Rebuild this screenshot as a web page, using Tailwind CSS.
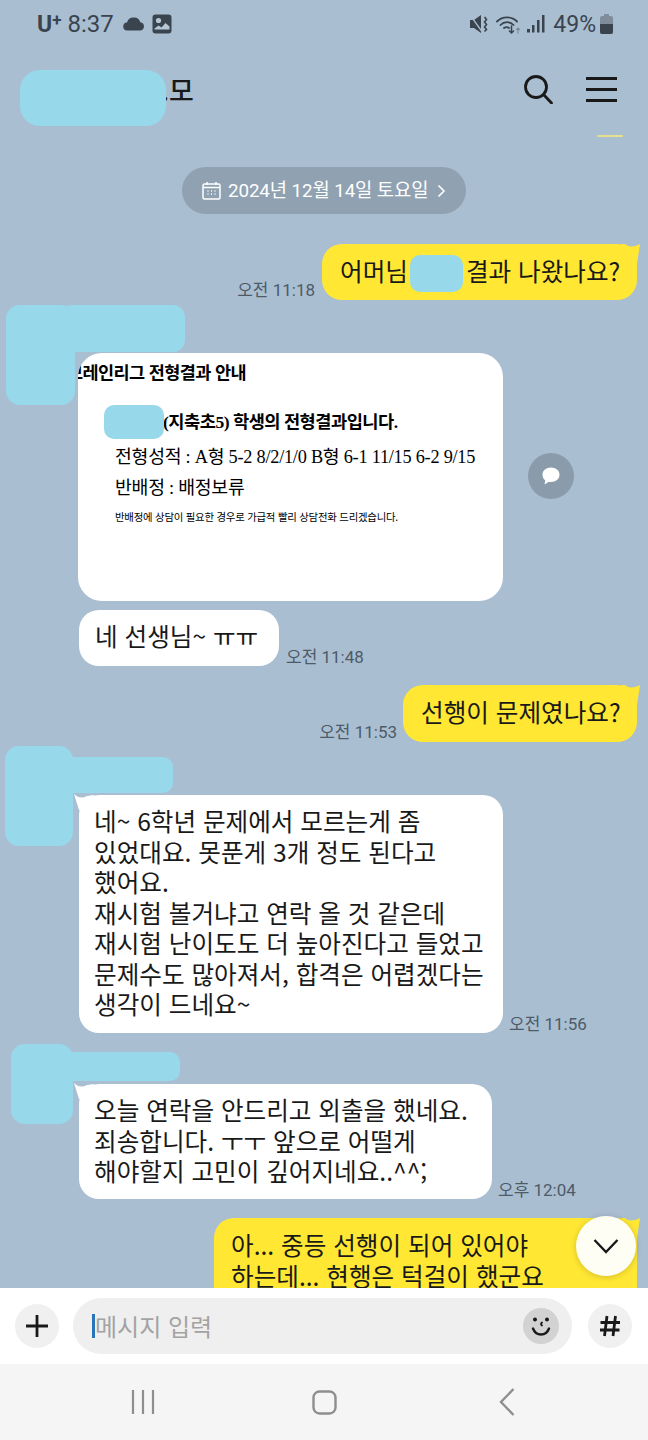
<!DOCTYPE html>
<html lang="ko">
<head>
<meta charset="utf-8">
<script src="https://cdn.jsdelivr.net/npm/@tailwindcss/browser@4"></script>
</head>
<body class="m-0">
<div class="relative w-[648px] h-[1440px] overflow-hidden bg-[#aabed1] font-['Noto_Sans_CJK_KR',sans-serif] text-[#191919]">
  <!-- chat -->
  <div class="h-[1288px] overflow-hidden flex flex-col">
    <!-- status bar -->
    <div class="h-[48px] shrink-0 flex items-center pl-[37px] pr-[35px] text-[#39444f] font-['Roboto',sans-serif]">
      <span class="text-[23px] font-bold leading-none">U</span><span class="text-[17px] font-bold leading-none -mt-[7px]">+</span>
      <span class="text-[24px] ml-[6px] leading-none">8:37</span>
      <svg class="ml-[9px]" width="22" height="14" viewBox="0 0 22 14"><path fill="#39444f" d="M4.500 13.500a4 4 0 0 1-.5-8A6.800 6.800 0 0 1 11 .5a6.500 6.500 0 0 1 6.300 4.700A4.200 4.200 0 0 1 17.500 13.500z"/></svg>
      <svg class="ml-[7px]" width="20" height="20" viewBox="0 0 20 20"><rect x="0.500" y="0.500" width="19" height="19" rx="3" fill="#39444f"/><circle cx="6.500" cy="6.500" r="2.600" fill="#b5c6d6"/><path fill="#b5c6d6" d="M2.500 15.500v-1l4-3 3 2 4-4.500 4 3.500v3z"/></svg>
      <div class="flex-1"></div>
      <svg width="18" height="20" viewBox="0 0 18 20"><path fill="#39444f" d="M0 6h4L11 1v18l-7-5H0z"/><path d="M0 1l13 18" stroke="#aabed1" stroke-width="1.300"/><path d="M14.500 3l2 2.500-2 2.500 2 2.500-2 2.500 2 2.500-2 2" fill="none" stroke="#39444f" stroke-width="1.600"/></svg>
      <svg class="ml-[8px]" width="25" height="20" viewBox="0 0 25 20" fill="none" stroke="#39444f" stroke-width="1.800" stroke-linecap="round"><path d="M1 7.500a14 14 0 0 1 20 0"/><path d="M4.500 11a9 9 0 0 1 13 0"/><path d="M8 14a4.500 4.500 0 0 1 5 0"/><path d="M15.500 12v7M13.500 17l2 2 2-2" stroke-width="1.500"/><path d="M22 19v-5M20.500 15.500l1.500-1.500 1.500 1.500" stroke="#7d8b98" stroke-width="1.200"/></svg>
      <svg class="ml-[6px]" width="18" height="18" viewBox="0 0 18 18" fill="#39444f"><rect x="0" y="14" width="3" height="3.500"/><rect x="5" y="10" width="2.500" height="7.500"/><rect x="10" y="5" width="2.500" height="12.500"/><rect x="15" y="0" width="2.500" height="17.500"/></svg>
      <span class="text-[23px] ml-[8px] leading-none">49%</span>
      <svg class="ml-[4px]" width="13" height="20" viewBox="0 0 13 20"><rect x="4" y="0" width="5" height="2" fill="#7f8d9b"/><rect x="0" y="2" width="13" height="18" rx="2" fill="#7f8d9b"/><path fill="#39444f" d="M0 10h13v8a2 2 0 0 1-2 2H2a2 2 0 0 1-2-2z"/></svg>
    </div>
    <!-- header -->
    <div class="h-[80px] shrink-0 flex items-center pl-[161px] pr-[31px] pt-[3px]">
      <span class="text-[27px] leading-none font-medium">.모</span>
      <div class="flex-1"></div>
      <svg width="29" height="29" viewBox="0 0 29 29" fill="none" stroke="#191919" stroke-width="2.800"><circle cx="12" cy="12" r="10.500"/><path d="M19.500 19.500l8 8.500" stroke-linecap="round"/></svg>
      <div class="ml-[33px] w-[31px] flex flex-col gap-[8px]">
        <div class="h-[3px] bg-[#191919]"></div><div class="h-[3px] bg-[#191919]"></div><div class="h-[3px] bg-[#191919]"></div>
      </div>
    </div>
    <div class="shrink-0 h-[39px] relative">
      <div class="absolute left-[597px] top-[7px] w-[26px] h-[2px] rounded-full bg-[#e5e08a]"></div>
    </div>
    <!-- date -->
    <div class="shrink-0 flex justify-center">
      <div class="w-[284px] h-[47px] rounded-full bg-[#90a2b1] flex items-center pl-[20px] text-white">
        <svg width="19" height="19" viewBox="0 0 19 19" fill="none" stroke="#fff" stroke-width="1.500"><rect x="1" y="3" width="17" height="15" rx="1.500"/><path d="M5 1v3M14 1v3M1 6.500h17"/><path d="M5.500 10h1M9 10h1M12.500 10h1M5.500 13h1M9 13h1M12.500 13h1" stroke-width="1.600"/></svg>
        <span class="ml-[7px] pt-[2px] text-[18.800px] leading-none tracking-[-0.1px] font-['Roboto','Noto_Sans_CJK_KR',sans-serif]">2024년 12월 14일 토요일</span>
        <svg class="ml-[9px]" width="9" height="14" viewBox="0 0 9 14" fill="none" stroke="#fff" stroke-width="1.600"><path d="M1.500 1.500L7 7l-5.500 5.500"/></svg>
      </div>
    </div>
    <!-- msg 1 -->
    <div class="shrink-0 mt-[30px] flex justify-end items-end pr-[11px]">
      <span class="text-[17px] leading-none text-[#4d5b68] mr-[7px] mb-[1px] font-['Roboto','Noto_Sans_CJK_KR',sans-serif]">오전 11:18</span>
      <div class="relative h-[56px] w-[315px] rounded-[20px] bg-[#ffe733] flex items-center pl-[18px] pb-[4px] text-[24.600px] leading-none whitespace-nowrap">
        어머님<span class="w-[58px]"></span>결과 나왔나요?
        <svg class="absolute -right-[3px] top-0" width="18" height="20" viewBox="0 0 18 20"><path fill="#ffe733" d="M0 0H3Q8 5 18 0L15 20H0z"/></svg>
      </div>
    </div>
    <!-- image -->
    <div class="shrink-0 mt-[53px] ml-[78px] flex items-center">
      <div class="w-[425px] h-[248px] rounded-[24px] bg-white overflow-hidden text-black">
        <div class="font-['Liberation_Serif','Noto_Sans_CJK_KR',serif]">
          <p class="text-[17.500px] font-bold leading-none -ml-[11px] mt-[10px] whitespace-nowrap font-['Noto_Sans_CJK_KR',sans-serif] tracking-[-0.6px]">브레인리그 전형결과 안내</p>
          <p class="text-[17.600px] font-bold leading-none ml-[85px] mt-[33px] whitespace-nowrap tracking-[-0.5px]">(지축초5) 학생의 전형결과입니다.</p>
          <p class="text-[18.300px] leading-none ml-[37px] mt-[17px] whitespace-nowrap tracking-[-0.25px]">전형성적 : A형 5-2 8/2/1/0 B형 6-1 11/15 6-2 9/15</p>
          <p class="text-[18.300px] leading-none ml-[37px] mt-[13px] whitespace-nowrap tracking-[-0.25px]">반배정 : 배정보류</p>
          <p class="text-[10.400px] leading-none ml-[37px] mt-[14px] whitespace-nowrap font-['Noto_Sans_CJK_KR',sans-serif] tracking-[-0.22px]">반배정에 상담이 필요한 경우로 가급적 빨리 상담전화 드리겠습니다.</p>
        </div>
      </div>
      <div class="ml-[25px] -mt-[2px] w-[46px] h-[46px] rounded-full bg-[#8a9cab] flex items-center justify-center">
        <svg width="20" height="20" viewBox="0 0 20 20"><path fill="#fff" d="M10 1.500c4.700 0 8.500 3 8.500 7.300S14.700 16 10 16c-.8 0-1.500-.1-2.200-.2L3.500 18.500l.8-4C2.500 13.100 1.500 11.100 1.500 8.800 1.500 4.500 5.300 1.500 10 1.500z"/></svg>
      </div>
    </div>
    <!-- ㅠㅠ -->
    <div class="shrink-0 mt-[9px] ml-[79px] flex items-end">
      <div class="h-[56px] w-[200px] rounded-[20px] bg-white flex items-center pl-[16px] pb-[5px] text-[24.600px] leading-none whitespace-nowrap">네 선생님~ ㅠㅠ</div>
      <span class="text-[17px] leading-none text-[#4d5b68] ml-[7px] font-['Roboto','Noto_Sans_CJK_KR',sans-serif]">오전 11:48</span>
    </div>
    <!-- 선행 -->
    <div class="shrink-0 mt-[19px] flex justify-end items-end pr-[11px]">
      <span class="text-[17px] leading-none text-[#4d5b68] mr-[6px] mb-[1px] font-['Roboto','Noto_Sans_CJK_KR',sans-serif]">오전 11:53</span>
      <div class="relative h-[57px] w-[234px] rounded-[20px] bg-[#ffe733] flex items-center pl-[18px] pb-[4px] text-[24.600px] leading-none whitespace-nowrap">
        선행이 문제였나요?
        <svg class="absolute -right-[3px] top-0" width="18" height="20" viewBox="0 0 18 20"><path fill="#ffe733" d="M0 0H3Q8 5 18 0L15 20H0z"/></svg>
      </div>
    </div>
    <!-- 네~ -->
    <div class="shrink-0 mt-[53px] ml-[79px] flex items-end">
      <div class="relative w-[424px] h-[238px] rounded-[20px] bg-white pl-[15px] pt-[10px] text-[24.600px] leading-[30.500px] whitespace-nowrap">
        <svg class="absolute -left-[5px] -top-[1px]" width="20" height="16" viewBox="0 0 20 16"><path fill="#fff" d="M0 0Q6 6 13 2L20 1V16H5z"/></svg>
        <span class="relative">네~ 6학년 문제에서 모르는게 좀<br>있었대요. 못푼게 3개 정도 된다고<br>했어요.<br>재시험 볼거냐고 연락 올 것 같은데<br>재시험 난이도도 더 높아진다고 들었고<br>문제수도 많아져서, 합격은 어렵겠다는<br>생각이 드네요~</span>
      </div>
      <span class="text-[17px] leading-none text-[#4d5b68] ml-[6px] font-['Roboto','Noto_Sans_CJK_KR',sans-serif]">오전 11:56</span>
    </div>
    <!-- 오늘 -->
    <div class="shrink-0 mt-[51px] ml-[79px] flex items-end">
      <div class="relative w-[413px] h-[115px] rounded-[20px] bg-white pl-[15px] pt-[10px] text-[24.600px] leading-[30.700px] whitespace-nowrap">
        <svg class="absolute -left-[5px] -top-[1px]" width="20" height="16" viewBox="0 0 20 16"><path fill="#fff" d="M0 0Q6 6 13 2L20 1V16H5z"/></svg>
        <span class="relative">오늘 연락을 안드리고 외출을 했네요.<br>죄송합니다. ㅜㅜ 앞으로 어떨게<br>해야할지 고민이 깊어지네요..^^;</span>
      </div>
      <span class="text-[17px] leading-none text-[#4d5b68] ml-[6px] font-['Roboto','Noto_Sans_CJK_KR',sans-serif]">오후 12:04</span>
    </div>
    <!-- 아 -->
    <div class="shrink-0 mt-[19px] flex justify-end pr-[11px]">
      <div class="relative w-[423px] h-[100px] rounded-[20px] bg-[#ffe733] pl-[17px] pt-[11px] text-[24.600px] leading-[30.700px] whitespace-nowrap">
        아... 중등 선행이 되어 있어야<br>하는데... 현행은 턱걸이 했군요
        <svg class="absolute -right-[3px] top-0" width="18" height="20" viewBox="0 0 18 20"><path fill="#ffe733" d="M0 0H3Q8 5 18 0L15 20H0z"/></svg>
      </div>
    </div>
  </div>

  <!-- input bar -->
  <div class="h-[76px] bg-white flex items-center pl-[15px] pr-[16px]">
    <div class="w-[44px] h-[44px] rounded-full bg-[#f0f0f0] flex items-center justify-center">
      <svg width="22" height="22" viewBox="0 0 22 22" stroke="#191919" stroke-width="2.800"><path d="M11 0v22M0 11h22"/></svg>
    </div>
    <div class="relative ml-[14px] w-[499px] h-[56px] rounded-full bg-[#efefef] flex items-center pl-[19px]">
      <div class="w-[3px] h-[24px] bg-[#2a74b8]"></div>
      <span class="text-[24px] leading-none text-[#a3a3a3]">메시지 입력</span>
      <div class="absolute right-[13px] top-[10px] w-[36px] h-[36px] rounded-full bg-[#d2d2d2] flex items-center justify-center">
        <svg width="24" height="24" viewBox="0 0 24 24" fill="none" stroke="#191919" stroke-width="2.400" stroke-linecap="round"><circle cx="6" cy="5.500" r="2" fill="#191919" stroke="none"/><circle cx="18" cy="5.500" r="2" fill="#191919" stroke="none"/><path d="M13 8.500q-2 1.500 0 3" stroke-width="1.800"/><path d="M4 14.500c1.500 4 4.500 6 8 6s6.500-2 8-6"/></svg>
      </div>
    </div>
    <div class="ml-[16px] w-[44px] h-[44px] rounded-full bg-[#f0f0f0] flex items-center justify-center">
      <svg width="22" height="22" viewBox="0 0 22 22" stroke="#191919" stroke-width="2.800"><path d="M8 1L5.500 21M16.500 1L14 21M1.500 7.500h19.500M1 15h19.500"/></svg>
    </div>
  </div>
  <!-- nav -->
  <div class="h-[76px] bg-[#f5f5f5] flex items-center">
    <svg class="ml-[131px]" width="24" height="24" viewBox="0 0 24 24" stroke="#8e8e8e" stroke-width="2.200"><path d="M2 0v24M12 0v24M22 0v24"/></svg>
    <svg class="ml-[157px]" width="25" height="25" viewBox="0 0 25 25" fill="none" stroke="#8e8e8e" stroke-width="2.400"><rect x="1.500" y="1.500" width="22" height="22" rx="6"/></svg>
    <svg class="ml-[162px]" width="16" height="28" viewBox="0 0 16 28" fill="none" stroke="#8e8e8e" stroke-width="2.400"><path d="M14.500 1L2 14l12.500 13"/></svg>
  </div>

  <!-- scroll-down button -->
  <div class="absolute left-[576px] top-[1216px] w-[60px] h-[60px] rounded-full bg-[#fffef5] shadow-[0_1px_6px_rgba(0,0,0,0.18)] flex items-center justify-center">
    <svg width="26" height="16" viewBox="0 0 26 16" fill="none" stroke="#191919" stroke-width="2.400"><path d="M1.500 2L13 14 24.500 2"/></svg>
  </div>

  <!-- redaction marks -->
  <div class="absolute left-[20px] top-[70px] w-[146px] h-[56px] rounded-[20px] bg-[#97d8ea]"></div>
  <div class="absolute left-[410px] top-[255px] w-[53px] h-[37px] rounded-[10px] bg-[#97d8ea]"></div>
  <div class="absolute left-[6px] top-[305px] w-[69px] h-[100px] rounded-[14px] bg-[#97d8ea]"></div>
  <div class="absolute left-[60px] top-[305px] w-[125px] h-[47px] rounded-[12px] bg-[#97d8ea]"></div>
  <div class="absolute left-[104px] top-[405px] w-[60px] h-[34px] rounded-[10px] bg-[#97d8ea]"></div>
  <div class="absolute left-[5px] top-[746px] w-[68px] h-[100px] rounded-[14px] bg-[#97d8ea]"></div>
  <div class="absolute left-[60px] top-[757px] w-[113px] h-[36px] rounded-[10px] bg-[#97d8ea]"></div>
  <div class="absolute left-[11px] top-[1044px] w-[62px] h-[80px] rounded-[14px] bg-[#97d8ea]"></div>
  <div class="absolute left-[60px] top-[1052px] w-[120px] h-[29px] rounded-[10px] bg-[#97d8ea]"></div>
</div>
</body>
</html>
